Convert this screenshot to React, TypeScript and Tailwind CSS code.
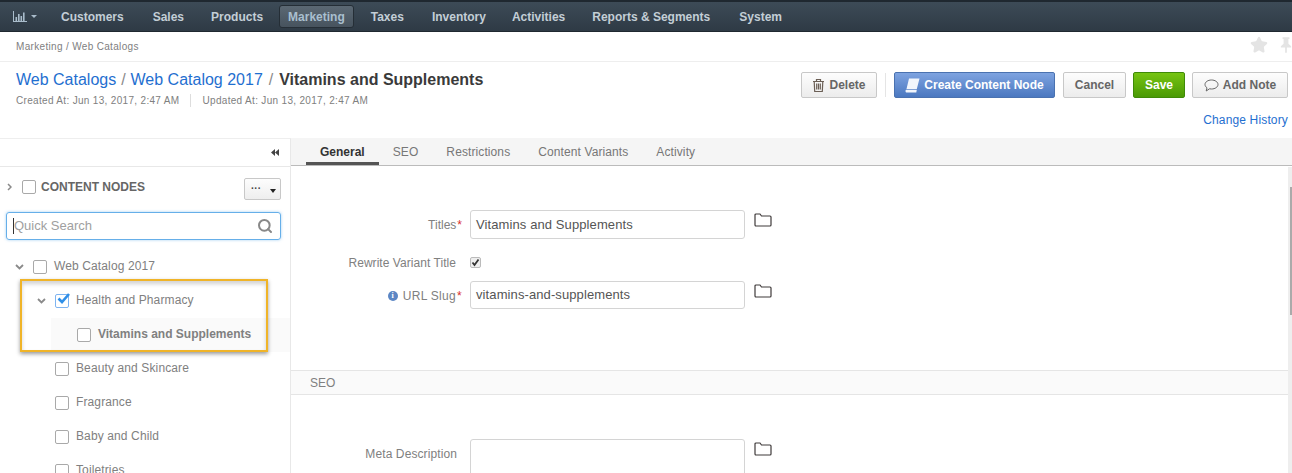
import React from 'react';
import { Star, Search } from 'lucide-react';

const navItems = [
  { label: 'Customers', cls: 'ml-[5px]' },
  { label: 'Sales', cls: 'ml-[11px]' },
  { label: 'Products', cls: 'ml-[9px]' },
  { label: 'Marketing', cls: 'ml-[7px]' },
  { label: 'Taxes', cls: 'ml-[8px]' },
  { label: 'Inventory', cls: 'ml-[10px]' },
  { label: 'Activities', cls: 'ml-[8px]' },
  { label: 'Reports & Segments', cls: 'ml-[9px]' },
  { label: 'System', cls: 'ml-[11px]' },
];
const tabs = ['General', 'SEO', 'Restrictions', 'Content Variants', 'Activity'];

const Folder = () => (
  <svg width="18" height="14" viewBox="0 0 18 14" fill="none" stroke="#3f3a3a" strokeWidth="1.2" className="shrink-0">
    <path d="M1 3V2a1 1 0 0 1 1-1h4l1.500 2H16a1 1 0 0 1 1 1v8a1 1 0 0 1-1 1H2a1 1 0 0 1-1-1V3z" />
  </svg>
);

const Box = ({ checked = false }: { checked?: boolean }) => (
  <span className={`relative block w-[14px] h-[14px] shrink-0 rounded-[2px] border-[1.5px] bg-white ${checked ? 'border-[#7fb4f0]' : 'border-[#a9a9a9]'}`}>
    {checked && (
      <svg width="15" height="13" viewBox="0 0 15 13" className="absolute left-[0px] top-[-3px]">
        <path d="M2.500 6.500 L6 10 L13 2" fill="none" stroke="#2f8fe8" strokeWidth="2.600" />
      </svg>
    )}
  </span>
);

const Chevron = () => (
  <svg width="9" height="6" viewBox="0 0 9 6" fill="none" stroke="#8a8a8a" strokeWidth="1.800" className="shrink-0">
    <path d="M1 1l3.500 3.500L8 1" />
  </svg>
);

const TreeRow = ({ pad, label, expand, checked, bold }: { pad: string; label: string; expand?: boolean; checked?: boolean; bold?: boolean }) => (
  <div className={`h-[34px] flex items-center ${pad}`}>
    {expand && <span className="w-[18px] flex"><Chevron /></span>}
    <Box checked={checked} />
    <span className={`ml-[7px] mb-[2px] text-[12px] text-[#808080] ${bold ? 'font-bold' : 'tracking-[0.12px]'}`}>{label}</span>
  </div>
);

const Btn = ({ children, className = '', tone = 'plain' }: { children: React.ReactNode; className?: string; tone?: 'plain' | 'blue' | 'green' }) => {
  const toneCls =
    tone === 'blue'
      ? 'border-[#4a72b0] from-[#7ea3e0] to-[#4b78c0] text-white'
      : tone === 'green'
        ? 'border-[#3f8a08] from-[#76c412] to-[#4a9a05] text-white'
        : 'border-[#c8c8c8] from-[#fdfdfd] to-[#ececec] text-[#666]';
  return (
    <button className={`h-[26px] flex items-center justify-center rounded-[2px] border bg-gradient-to-b text-[12px] font-bold ${toneCls} ${className}`}>
      {children}
    </button>
  );
};

const Req = () => <span className="ml-[1px] text-[#d9302c]">*</span>;

const Field = ({ label, value, inputH = 'h-[29px]' }: { label: React.ReactNode; value: string; inputH?: string }) => (
  <div className="flex items-start h-[29px]">
    <label className="w-[179px] h-[29px] flex items-center justify-end text-[12px] text-[#808080] pr-[8px]">{label}</label>
    <div className={`w-[275px] ${inputH} border border-[#d4d4d4] rounded-[3px] flex items-center px-[5px] text-[13px] tracking-[0.1px] text-[#555]`}>{value}</div>
    <span className="ml-[9px] mt-[3px]"><Folder /></span>
  </div>
);

export default function App() {
  return (
    <div className="w-[1292px] h-[473px] overflow-hidden bg-white font-['Liberation_Sans',Arial,sans-serif] flex flex-col">
      {/* top nav */}
      <nav className="h-[32px] shrink-0 border-t-2 border-t-[#1f2830] border-b border-b-[#1f2830] bg-gradient-to-b from-[#3d4b57] to-[#2e3a45] flex items-center pl-[13px]">
        <div className="w-[34px] flex items-center gap-[4px]">
          <svg width="14" height="11" viewBox="0 0 14 11" fill="#a9bccb">
            <path d="M0 0h1v10h13v1H0z" />
            <path d="M2.500 6h1.600v4H2.500zM5 3h1.600v7H5zM7.500 5h1.600v5H7.500zM10 1.500h1.600V10H10z" />
          </svg>
          <span className="border-x-[3px] border-x-transparent border-t-[3px] border-t-[#a9bccb]" />
        </div>
        {navItems.map((item) => (
          <span
            key={item.label}
            className={`${item.cls} h-[23px] flex items-center rounded-[3px] text-[12px] font-bold ${
              item.label === 'Marketing' ? 'bg-gradient-to-b from-[#5b6873] to-[#47535e] border border-[#252e36] px-[8px] text-[#a9bfcf]' : 'px-[9px] text-[#c3ced6]'
            }`}
          >
            {item.label}
          </span>
        ))}
      </nav>

      {/* breadcrumb */}
      <div className="h-[30px] shrink-0 border-b border-b-[#eeeeee] flex items-center justify-between pl-[16px]">
        <span className="text-[10px] tracking-[0.33px] text-[#808080] mt-[-1px]">Marketing / Web Catalogs</span>
        <div className="flex items-center gap-[12px] mt-[-3px]">
          <Star size={18} fill="#e4e4e4" stroke="#e4e4e4" />
          <svg width="12" height="18" viewBox="0 0 14 18" fill="#e4e4e4">
            <path d="M3 0h8v2H9.800v5.500L13 10.500V12H8v6H6v-6H1v-1.500l3.200-3V2H3z" />
          </svg>
        </div>
      </div>

      {/* header */}
      <div className="h-[76px] shrink-0 flex justify-between pl-[16px] pr-[4px]">
        <div className="pt-[8px]">
          <div className="text-[16px] leading-[20px] text-[#8a8a8a]">
            <span className="text-[#1f6fd0]">Web Catalogs</span>
            <span className="mx-[0.5px]"> / </span>
            <span className="text-[#1f6fd0]">Web Catalog 2017</span>
            <span className="mx-[1.5px]"> / </span>
            <span className="font-bold text-[#3a3a3a]">Vitamins and Supplements</span>
          </div>
          <div className="mt-[4px] flex items-center text-[10px] tracking-[0.32px] text-[#808080]">
            <span className="pr-[11px] border-r border-r-[#dddddd] leading-[13px]">Created At: Jun 13, 2017, 2:47 AM</span>
            <span className="pl-[11px] leading-[13px]">Updated At: Jun 13, 2017, 2:47 AM</span>
          </div>
        </div>
        <div className="flex flex-col items-end pt-[10px]">
          <div className="flex items-center">
            <Btn className="w-[76px] gap-[4px]">
              <svg width="13" height="15" viewBox="0 0 13 15" fill="none" stroke="#6b5f55" strokeWidth="1.200">
                <path d="M1 3.500h11M4.500 3.500V1.500h4v2M2.200 3.500l.5 10h7.600l.5-10M4.700 5.500v6M6.500 5.500v6M8.300 5.500v6" />
              </svg>
              Delete
            </Btn>
            <span className="w-px h-[24px] bg-[#e5e5e5] mx-[8px]" />
            <Btn tone="blue" className="w-[161px] gap-[4px]">
              <svg width="15" height="15" viewBox="0 0 15 15" fill="#f2f6fc">
                <path d="M4 0.500h10.500L11.800 11H1.500zM0.500 13c0-1 .5-1.300 1-1.300h10.300l-.5 2.800H2c-1 0-1.500-.5-1.500-1.500z" />
              </svg>
              Create Content Node
            </Btn>
            <Btn className="w-[63px] ml-[8px]">Cancel</Btn>
            <Btn tone="green" className="w-[52px] ml-[7px]">Save</Btn>
            <Btn className="w-[96px] ml-[7px] gap-[4px]">
              <svg width="15" height="13" viewBox="0 0 15 13" fill="none" stroke="#666" strokeWidth="1">
                <path d="M7.500 1C3.900 1 1 3 1 5.500c0 1.300.8 2.500 2 3.300L2.200 12l3.300-2.200c.6.100 1.300.2 2 .2C11.100 10 14 8 14 5.500S11.100 1 7.500 1z" />
              </svg>
              Add Note
            </Btn>
          </div>
          <a className="mt-[13px] text-[12px] tracking-[0.15px] text-[#1f6fd0]">Change History</a>
        </div>
      </div>

      {/* body */}
      <div className="flex-1 flex min-h-0">
        <aside className="relative w-[291px] shrink-0 border-t border-t-[#eeeeee] border-r border-r-[#e8e8e8]">
          <div className="h-[28px] border-b border-b-[#e8e8e8] flex items-center justify-end pr-[11px]">
            <svg width="8" height="7" viewBox="0 0 8 7" fill="#444">
              <path d="M4 0v7L0 3.500zM8 0v7L4 3.500z" />
            </svg>
          </div>
          <div className="h-[45px] flex items-center pl-[7px] pr-[9px]">
            <div className="flex items-center mt-[-6px]">
              <svg width="5" height="8" viewBox="0 0 5 8" fill="none" stroke="#8a8a8a" strokeWidth="1.500" className="mr-[10px]">
                <path d="M1 1l3 3-3 3" />
              </svg>
              <Box />
              <span className="ml-[5px] text-[12px] font-bold text-[#666]">CONTENT NODES</span>
            </div>
            <div className="ml-auto mt-[-1px] w-[37px] h-[22px] border border-[#c8c8c8] rounded-[2px] bg-gradient-to-b from-[#fdfdfd] to-[#eeeeee] flex items-center justify-between pl-[6px] pr-[4px]">
              <span className="text-[10px] leading-[10px] font-bold text-[#444]">···</span>
              <span className="mt-[3px] border-x-[3.5px] border-x-transparent border-t-[4px] border-t-[#222]" />
            </div>
          </div>
          <div className="mx-[6px] w-[275px] h-[28px] rounded-[3px] border border-[#66afe9] shadow-[0_0_3px_rgba(102,175,233,0.6)] flex items-center justify-between pl-[6px] pr-[7px]">
            <span className="border-l border-l-[#333] text-[13px] leading-[16px] text-[#a0a0a0]">Quick Search</span>
            <Search size={16} stroke="#888" strokeWidth={3} />
          </div>
          <div className="mt-[10px]">
            <TreeRow pad="pl-[15px] pb-[1px]" label="Web Catalog 2017" expand />
            <TreeRow pad="pl-[37px]" label="Health and Pharmacy" expand checked />
            <div className="ml-[51px] bg-[#fafafa]">
              <TreeRow pad="pl-[26px]" label="Vitamins and Supplements" bold />
            </div>
            <TreeRow pad="pl-[55px]" label="Beauty and Skincare" />
            <TreeRow pad="pl-[55px]" label="Fragrance" />
            <TreeRow pad="pl-[55px]" label="Baby and Child" />
            <TreeRow pad="pl-[55px]" label="Toiletries" />
          </div>
          {/* highlight callout */}
          <div className="absolute left-[20px] top-[140px] w-[248px] h-[73px] border-2 border-[#f0b428] shadow-[0_2px_4px_rgba(0,0,0,0.4),inset_0_3px_4px_rgba(0,0,0,0.18)]" />
        </aside>

        <main className="flex-1 min-w-0 relative">
          <div className="h-[28px] bg-[#f5f5f5] border-b border-b-[#bbbbbb] flex pl-[15px]">
            {tabs.map((tab) => (
              <span
                key={tab}
                className={`px-[14px] h-[27px] flex items-center text-[12px] ${
                  tab === 'General' ? 'font-bold text-[#333] border-b-[3px] border-b-[#555] pt-[3px]' : 'tracking-[0.1px] text-[#777]'
                }`}
              >
                {tab}
              </span>
            ))}
          </div>
          <div className="pt-[44px] h-[205px] border-b border-b-[#e5e5e5]">
            <Field label={<span>Titles<Req /></span>} value="Vitamins and Supplements" />
            <div className="flex items-center h-[18px] mt-[14px]">
              <label className="w-[179px] pr-[14px] pt-[1px] text-right text-[12px] tracking-[0.05px] text-[#808080]">Rewrite Variant Title</label>
              <span className="relative w-[11px] h-[11px] rounded-[2px] border border-[#bbb] bg-[#eeeeee]">
                <svg width="9" height="9" viewBox="0 0 9 9" className="absolute left-0 top-0">
                  <path d="M1.500 4.500 3.500 7 7.500 1.500" fill="none" stroke="#333" strokeWidth="1.800" />
                </svg>
              </span>
            </div>
            <div className="mt-[10px]">
              <Field
                inputH="h-[28px]"
                label={
                  <span className="inline-flex items-center justify-end gap-[5px]">
                    <span className="w-[10px] h-[10px] rounded-full bg-[#5b86c4] text-white text-[8px] leading-[10px] font-bold text-center font-['Liberation_Serif',serif]">i</span>
                    <span className="tracking-[0.3px]">URL Slug<Req /></span>
                  </span>
                }
                value="vitamins-and-supplements"
              />
            </div>
          </div>
          <div className="h-[24px] bg-[#fafafa] border-b border-b-[#e5e5e5] flex items-center pl-[19px] text-[12px] text-[#808080]">SEO</div>
          <div className="pt-[44px] flex items-start">
            <label className="w-[166px] pt-[6px] text-right text-[12px] tracking-[0.1px] text-[#808080]">Meta Description</label>
            <div className="ml-[13px] w-[275px] h-[60px] border border-[#d4d4d4] rounded-[3px]" />
            <span className="ml-[9px] mt-[3px]"><Folder /></span>
          </div>
          {/* scrollbar */}
          <div className="absolute right-0 top-[29px] bottom-0 w-[4px] bg-[#eeeeee]">
            <div className="ml-[2px] mt-[20px] w-[2px] h-[128px] bg-[#aaaaaa]" />
          </div>
        </main>
      </div>
    </div>
  );
}
